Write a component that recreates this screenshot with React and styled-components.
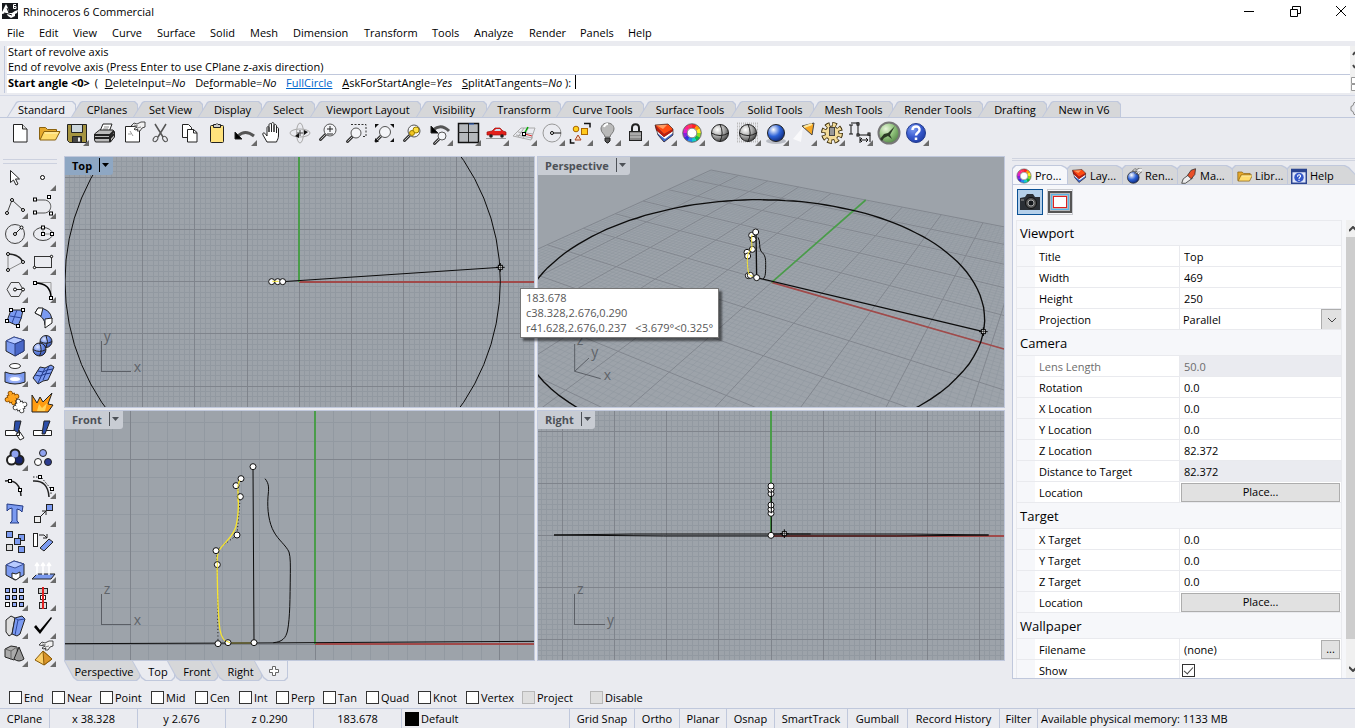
import React from "react";
import styled, { createGlobalStyle, css } from "styled-components";

const line = "#c0c8dc";
const chrome = "#eaebf0";
const blue = "#7b9af0";

const GlobalStyle = createGlobalStyle`
  * { box-sizing: border-box; }
  html, body, #root { height: 100%; }
  body {
    margin: 0;
    overflow: hidden;
    background: ${chrome};
    color: #000;
    font: 11px/15px "Open Sans", "Noto Sans", sans-serif;
  }
  button, input, select { font: inherit; color: inherit; }
  button { padding: 0; border: 0; background: none; white-space: nowrap; }
  svg { display: block; }
`;

const Window = styled.div`
  display: flex;
  flex-direction: column;
  height: 100vh;
  overflow: hidden;
`;

const TitleBar = styled.header`
  display: flex;
  align-items: center;
  gap: 5px;
  height: 24px;
  padding: 0 0 2px 2px;
  background: #fff;
  h1 { flex: 1; margin: 0; font-size: 11px; font-weight: 400; }
`;

// the close button runs past the right edge of a maximised window
const WindowButtons = styled.div`
  display: flex;
  margin-right: -9px;
`;

const WindowButton = styled.button`
  display: grid;
  place-items: center;
  width: 46px;
  height: 20px;
`;

const MenuBar = styled.nav`
  display: flex;
  height: 17px;
  padding-left: 7px;
  background: #fff;
`;

const MenuItem = styled.button`
  flex: 0 0 ${p => p.$w}px;
  text-align: left;
  line-height: 17px;
`;

const Command = styled.section`
  display: flex;
  margin: 5px 0 2px 4px;
  border-left: 1px solid ${line};
  padding-left: 2px;
`;

const CommandText = styled.div`
  flex: 1;
  background: #fff;
`;

const History = styled.div`
  height: 29px;
  padding-left: 1px;
  border-bottom: 1px solid ${line};
  line-height: 12px;
  overflow: hidden;
  p { margin: 0; height: 15px; }
`;

const Prompt = styled.div`
  height: 18px;
  padding-left: 1px;
  line-height: 16px;
  white-space: pre;
  b { margin-right: 2px; }
  button, a { margin-left: 4px; white-space: pre; }
  a { color: #0066cc; }
  input {
    width: 200px;
    height: 14px;
    margin-left: 4px;
    padding: 0;
    border: 0;
    border-left: 1px solid #000;
    outline: 0;
    vertical-align: top;
  }
`;

const Spinners = styled.div`
  width: 5px;
  overflow: hidden;
  background: #f0f0f0;
`;

const TabRow = styled.div`
  display: flex;
  justify-content: space-between;
  height: 23px;
  padding: 5px 0 0 7px;
  border-top: 1px solid #d5d9e6;
  border-bottom: 1px solid ${line};
`;

const Tabs = styled.div`
  display: flex;
  flex: none;
`;

const shapes = {
  top: "polygon(0 100%, 9px 1px, 11px 0, calc(100% - 3px) 0, 100% 3px, 100% 100%)",
  side: "polygon(0 100%, 0 3px, 3px 0, calc(100% - 20px) 0, calc(100% - 16px) 2px, 100% 100%)",
  bottom: "polygon(0 0, 100% 0, 100% calc(100% - 3px), calc(100% - 3px) 100%, 13px 100%, 9px calc(100% - 3px))"
};

const Tab = styled.button`
  position: relative;
  isolation: isolate;
  flex: 0 0 ${p => p.$w}px;
  height: 100%;
  background: ${line};
  clip-path: ${p => shapes[p.$shape]};
  &::before {
    content: "";
    position: absolute;
    z-index: -1;
    inset: 1px;
    background: ${p => (p.$active ? (p.$shape === "side" ? "#f6f7fa" : chrome) : "#d6d7d9")};
    clip-path: ${p => shapes[p.$shape]};
  }
  ${p => p.$shape === "top" && css`
    margin-left: -5px;
    padding-left: 5px;
    &:first-child { margin-left: 0; padding-left: 0; }
    &::before { bottom: 0; }
  `}
  ${p => p.$shape === "side" && css`
    display: flex;
    align-items: center;
    gap: 3px;
    margin-right: -15px;
    padding: 2px 0 0 4px;
    text-align: left;
    &::before { bottom: 0; }
  `}
  ${p => p.$shape === "bottom" && css`
    margin-left: -8px;
    padding-left: 9px;
    &:first-child { margin-left: 0; padding-left: 4px; }
    &::before { top: 0; }
  `}
`;

const Toolbar = styled.div`
  display: flex;
  flex: none;
  height: 38px;
  padding: 1px 6px;
`;

const ToolButton = styled.button`
  width: 28px;
  height: 28px;
`;

const Body = styled.main`
  display: flex;
  flex: 1;
  min-height: 0;
`;

const Palette = styled.div`
  display: grid;
  grid-template-columns: 28px 28px;
  grid-template-rows: 5px;
  grid-auto-rows: 28px;
  flex: 0 0 64px;
  align-content: start;
  padding: 3px 0 0 1px;
  &::before {
    content: "";
    grid-column: 1 / 3;
    height: 3px;
    margin-left: 2px;
    border: solid #ccd1df;
    border-width: 1px 0;
  }
`;

const Workspace = styled.div`
  display: flex;
  flex-direction: column;
  flex: 1;
  min-width: 0;
  padding-bottom: 6px;
`;

const ViewGrid = styled.div`
  position: relative;
  display: grid;
  grid-template-columns: 471fr 468fr;
  grid-template-rows: 252fr 251fr;
  gap: 2px;
  flex: 1;
  min-height: 0;
`;

const View = styled.section`
  position: relative;
  min-width: 0;
  min-height: 0;
  border: 1px solid ${line};
  background: #9da3aa;
  overflow: hidden;
  svg.scene { width: 100%; height: 100%; }
`;

const ViewTitle = styled.button`
  position: absolute;
  top: 0;
  left: 0;
  display: flex;
  align-items: center;
  gap: 7px;
  height: 18px;
  padding: 0 4px 2px 7px;
  border-radius: 0 0 3px 0;
  background: ${p => (p.$active ? "#8ea7c3" : "#c8ccd3")};
  color: ${p => (p.$active ? "#000" : "#4d5157")};
  font-weight: 700;
`;

const Readout = styled.output`
  position: absolute;
  top: 132px;
  left: 456px;
  width: 199px;
  padding: 1px 5px 2px;
  border: 1px solid #767676;
  background: #fff;
  box-shadow: 3px 3px 2px rgba(0, 0, 0, 0.5);
  color: #575757;
  white-space: pre;
`;

const ViewTabs = styled.div`
  display: flex;
  height: 20px;
`;

const Panel = styled.aside`
  display: flex;
  flex-direction: column;
  flex: 0 0 343px;
  margin: 2px 0 8px 7px;
  border-top: 1px solid #d0d4e0;
  overflow: hidden;
`;

const PanelTabs = styled.div`
  display: flex;
  flex: none;
  height: 24px;
  padding-top: 4px;
  margin-top: 1px;
  border-top: 1px solid #d0d4e0;
  overflow: hidden;
`;

const PanelBody = styled.div`
  display: flex;
  flex-direction: column;
  flex: 1;
  min-height: 0;
  border: solid ${line};
  border-width: 1px 0 1px 1px;
  background: #f6f7fa;
`;

const ModeButtons = styled.div`
  display: flex;
  gap: 4px;
  height: 35px;
  padding: 4px;
`;

const ModeButton = styled.button`
  width: 26px;
  height: 26px;
  border: 1px solid ${p => (p.$on ? "#0a5195" : "#c9cbd0")};
  background: ${p => (p.$on ? "#b5d0ea" : "#f6f7fa")};
`;

const Scroller = styled.div`
  display: flex;
  flex: 1;
  min-height: 0;
  overflow: hidden;
`;

const Props = styled.table`
  flex: none;
  align-self: flex-start;
  width: 326px;
  margin-left: 3px;
  border: 1px solid #e9eaee;
  border-width: 1px 1px 0;
  border-collapse: separate;
  border-spacing: 0;
  table-layout: fixed;
  th { font-weight: 400; text-align: left; padding: 0; }
  td { padding: 0; }
  tr { height: 21px; }
`;

const GroupHead = styled.th`
  && {
    height: ${p => (p.$first ? 25 : 26)}px;
    padding: 1px 0 0 3px;
    border-bottom: 1px solid #e9eaee;
    font-size: 13px;
  }
`;

const Gutter = styled.td`
  border-bottom: 1px solid #e9eaee;
`;

const Label = styled.th`
  && {
    height: 21px;
    padding-left: 4px;
    border-bottom: 1px solid #e9eaee;
    background: #fff;
    color: ${p => (p.$dim ? "#6d6d6d" : "#000")};
  }
`;

const Value = styled.td`
  height: 21px;
  border: solid #e9eaee;
  border-width: 0 0 1px 1px;
  background: ${p => (p.$locked ? chrome : "#fff")};
  color: ${p => (p.$dim ? "#6d6d6d" : "#000")};
  line-height: 19px;
  input[type="text"] { flex: 1; min-width: 0; height: 19px; padding: 0 0 0 4px; border: 0; background: none; outline: 0; }
`;

const FieldBox = styled.div`
  display: flex;
  align-items: center;
  height: 20px;
  padding-left: ${p => (p.$inset ? 2 : 0)}px;
`;

const PlaceButton = styled.button`
  flex: 1;
  height: 19px;
  margin: 0 1px;
  border: 1px solid #adadad;
  background: #e1e1e1;
  line-height: 16px;
`;

const BrowseButton = styled(PlaceButton)`
  flex: 0 0 19px;
`;

const Picker = styled.select`
  flex: 1;
  height: 20px;
  padding: 0 0 0 3px;
  border: 0;
  background: #fff;
  appearance: none;
  outline: 0;
`;

const PickerArrow = styled.span`
  display: grid;
  place-items: center;
  width: 20px;
  height: 20px;
  border: solid #adadad;
  border-width: 1px 0 0 1px;
  background: #e1e1e1;
`;

const Scrollbar = styled.div`
  display: flex;
  flex-direction: column;
  justify-content: space-between;
  flex: 0 0 9px;
  margin-left: auto;
  padding: 6px 0 6px 3px;
  background: linear-gradient(#cdcdcd, #cdcdcd) 0 17px / 100% calc(100% - 56px) no-repeat #f0f0f0;
  overflow: hidden;
`;

const Check = styled.input`
  appearance: none;
  display: grid;
  place-items: center;
  flex: none;
  width: 13px;
  height: 13px;
  margin: 0;
  border: 1px solid #333;
  background: #fff;
  &:disabled { border-color: #b8b8b8; background: #dfdfdf; }
  &:checked::after {
    content: "";
    width: 4px;
    height: 8px;
    margin-bottom: 2px;
    border: solid #444;
    border-width: 0 1px 1px 0;
    transform: rotate(42deg);
  }
`;

const SnapBar = styled.div`
  display: flex;
  align-items: center;
  height: 21px;
  margin: 0 0 0 3px;
  padding-left: 6px;
`;

const Snap = styled.label`
  display: flex;
  align-items: center;
  gap: 2px;
  flex: 0 0 ${p => p.$w}px;
  white-space: nowrap;
`;

const StatusBar = styled.footer`
  display: flex;
  height: 20px;
  border-top: 1px solid ${line};
`;

const StatusCell = styled.button`
  flex: 0 0 ${p => p.$w}px;
  display: flex;
  align-items: center;
  justify-content: ${p => (p.$left ? "flex-start" : "center")};
  gap: 2px;
  padding-left: ${p => (p.$left ? 3 : 0)}px;
  border-right: 1px solid ${p => (p.$end ? "transparent" : line)};
  i { width: 14px; height: 14px; background: #000; }
`;

/* ---------- icons: each is drawn on a 28 x 28 cell ---------- */

const Icon = ({ children, more }) => (
  <svg width="28" height="28" viewBox="0 0 28 28" fill="none" stroke="#222" strokeWidth="1">
    {children}
    {more && <path d="M27 21v6h-6z" fill="#6b6b6b" stroke="none" />}
  </svg>
);

const Dot = ({ x, y, r = 1.5 }) => <circle cx={x} cy={y} r={r} fill="#fff" stroke="#000" />;
const Sq = ({ x, y, s = 3, fill = "#fff" }) => (
  <rect x={x - s / 2} y={y - s / 2} width={s} height={s} fill={fill} stroke="#000" />
);

const Lens = ({ x = 15, y = 12, r = 6 }) => (
  <g>
    <path d={`M${x - r + 1.5} ${y + r - 1.5}l-5 5`} stroke="#333" strokeWidth="3" strokeLinecap="round" />
    <path d={`M${x - r + 1.5} ${y + r - 1.5}l-5 5`} stroke="#bbb" />
    <circle cx={x} cy={y} r={r} fill="#f4f5f8" stroke="#555" />
  </g>
);

const Ball = ({ x = 14, y = 14, r = 9, fill = "url(#gray)", wires = true }) => (
  <g stroke="#222">
    <circle cx={x} cy={y} r={r} fill={fill} />
    {wires && <path d={`M${x - r} ${y}q${r} ${r * 0.6} ${r * 2} 0M${x} ${y - r}q${r * 0.5} ${r} 0 ${r * 2}`} strokeWidth="1" />}
  </g>
);

const wheel = ["#f22", "#f90", "#fe2", "#8d2", "#1b4", "#1cc", "#28e", "#33d", "#82d", "#d2c", "#f28", "#f35"];

const ColorWheel = ({ r = 7 }) => (
  <g fill="none" strokeWidth="4">
    {wheel.map((c, i) => {
      const a = (i * Math.PI) / 6;
      const b = a + Math.PI / 5.6;
      return (
        <path
          key={c}
          stroke={c}
          d={`M${14 + r * Math.sin(a)} ${14 - r * Math.cos(a)}A${r} ${r} 0 0 1 ${14 + r * Math.sin(b)} ${14 - r * Math.cos(b)}`}
        />
      );
    })}
    <circle cx="14" cy="14" r={r + 2.3} stroke="#333" strokeWidth=".7" />
    <circle cx="14" cy="14" r={r - 2.2} stroke="#555" strokeWidth=".7" fill="#fff" />
  </g>
);

const Layers = () => (
  <g stroke="none">
    <path d="M5 6l3 10 6 7 9-7V10z" fill="#1b2c63" />
    <path d="M7 14l8 6 8-6v2l-9 7-6-7z" fill="#3f6bd0" />
    <path d="M6 11l8 7 9-6v2l-8 6-8-6z" fill="#fff" />
    <path d="M5 6l9 9 9-5v2l-9 6-8-7z" fill="#c01c0a" />
    <path d="M5 6l13-1 5 5-9 5z" fill="#ff4a12" />
    <path d="M6 6l11 0-4 4z" fill="#ff9b62" />
    <path d="M5 6l13-1 5 5v6l-9 7-6-7z" fill="none" stroke="#3a2522" strokeWidth=".7" />
  </g>
);

const Folder = () => (
  <g stroke="#8a6210">
    <path d="M5.500 20.500V8.500h6l2 2h9v4" fill="#e6a92c" />
    <path d="M6 21l4-8.500h16L21.500 21z" fill="#ffdc6e" />
    <path d="M11 14h13" stroke="#fff3b8" />
  </g>
);

const Hand = ({ x = 0, y = 0 }) => (
  <g transform={`translate(${x} ${y})`}>
    <path d="M0 4l3-3 3 1 4-2h4v5l-3 1-2 3H6l1-2-3 1-1-1 3-2z" fill="#f2f2f2" stroke="#222" strokeWidth=".8" />
    <path d="M3 3l4 1M6 6l4-1" stroke="#555" strokeWidth=".7" />
  </g>
);

const Box = () => (
  <g>
    <path d="M5 9l8-4 10 3v11l-9 5-9-5z" fill={blue} />
    <path d="M5 9l8-4 10 3-9 4z" fill="#b8cbff" stroke="#3a4f9a" />
    <path d="M14 12l9-4v11l-9 5z" fill="#4a68c8" stroke="#2a3c80" />
  </g>
);

// jigsaw piece: a small block with a knob on each side
const Piece = ({ x, y, fill, edge }) => (
  <g transform={`translate(${x} ${y}) rotate(-20)`}>
    <g fill={edge} stroke={edge} strokeWidth="1.500">
      <rect x="-3.500" y="-3.500" width="7" height="7" />
      <circle cx="0" cy="-5" r="1.800" /><circle cx="5" cy="0" r="1.800" />
      <circle cx="0" cy="5" r="1.800" /><circle cx="-5" cy="0" r="1.800" />
    </g>
    <g fill={fill} stroke="none">
      <rect x="-3.500" y="-3.500" width="7" height="7" />
      <circle cx="0" cy="-5" r="1.800" /><circle cx="5" cy="0" r="1.800" />
      <circle cx="0" cy="5" r="1.800" /><circle cx="-5" cy="0" r="1.800" />
    </g>
  </g>
);

const HelpBall = () => (
  <g>
    <circle cx="14" cy="14" r="9.500" fill="url(#help)" stroke="#233b8c" />
    <path d="M10.500 11c0-5 7.500-4.500 7 0c0 2.500-3.500 2.500-3.500 5.500M14 18.500v2.500" stroke="#fff" strokeWidth="2.500" />
  </g>
);

// eight teeth from a dashed ring
const Gear = () => (
  <g>
    <circle cx="14" cy="14" r="8.500" stroke="#3b2c08" strokeWidth="5" strokeDasharray="4.300 2.376" />
    <circle cx="14" cy="14" r="7" fill="#f3dc9a" stroke="#3b2c08" />
    <circle cx="14" cy="14" r="8" stroke="#f3dc9a" strokeWidth="4" strokeDasharray="2.800 3.483" strokeDashoffset="-.600" />
    <rect x="11.500" y="8.500" width="5" height="8" fill="#999" stroke="#444" />
  </g>
);

const toolbar = [
  ["New", 0, <><path d="M7.500 5.500h9l4.500 4.500v13H7.500z" fill="#fff" /><path d="M16.500 5.500V10H21" fill="#ddd" /></>],
  ["Open", 0, <Folder />],
  ["Save", 1, <><path d="M5.500 5.500h19v18h-17l-2-2z" fill="#a59440" /><path d="M9.500 5.500h11v8h-11z" fill="#ccd6dc" /><path d="M10.500 17.500h9v6h-9z" fill="#444" /><path d="M16 18.500h2v4h-2z" fill="#eee" stroke="none" /></>],
  ["Print", 0, <><path d="M10 12l3-7h9l-3 8z" fill="#fff" /><path d="M14 8h5M13 10h5" stroke="#888" /><path d="M4.500 15l5-4h13.500l1.500 2v5l-4 5H5.500l-1-2z" fill="#bbb" /><path d="M5 16h15l4-4M5 19h15l4-4M20 16v7" strokeWidth="2" /></>],
  ["Document properties", 0, <><path d="M7.500 7.500h14v15.500h-14z" fill="#fff" /><path d="M12 12l3 5M10 15h3" stroke="#999" /><Hand x={13} y={3} /></>],
  ["Cut", 0, <><path d="M9 5l8 13M20 5l-8 13" stroke="#555" strokeWidth="1.500" /><ellipse cx="9.500" cy="20" rx="2" ry="3" transform="rotate(35 9.500 20)" stroke="#555" /><ellipse cx="19" cy="20" rx="2" ry="3" transform="rotate(-35 19 20)" stroke="#555" /></>],
  ["Copy", 0, <><path d="M8.500 5.500h6l3 3v10h-9z" fill="#fff" /><path d="M13.500 10.500h6l3.500 3v9.500h-9.500z" fill="#fff" /><path d="M19.500 10.500v3.500H23" /></>],
  ["Paste", 0, <><rect x="8.500" y="6.500" width="13" height="17" rx="1" fill="#ffe27c" /><path d="M11.500 8.500v-3h2.500l1-1 1 1h2.500v3z" fill="#ccc" /></>],
  ["Undo", 1, <><path d="M8 17Q15 10 24 17" strokeWidth="3" stroke="#555" /><path d="M5 13v7h7z" fill="#000" /></>],
  ["Pan", 0, <path d="M9 23l-4-7c-1-2 1-3 2.500-1L9 17V9c0-2 2-2 2 0v4-7c0-2 2.500-2 2.500 0v7-8c0-2 2.500-2 2.500 0v8-6c0-2 2.500-2 2.500 0v7-4c0-2 2-2 2 0v6c0 4-1 4-2 7z" fill="#fff" />],
  ["Rotate view", 0, <><ellipse cx="14" cy="14" rx="10" ry="4" stroke="#aaa" /><ellipse cx="14" cy="14" rx="3.500" ry="10" stroke="#aaa" /><path d="M14 11v6M11 14h6" stroke="#444" /><path d="M9 17l4-3v5zM18 11l4 2-4 3z" fill="#111" stroke="none" /></>],
  ["Zoom", 0, <><Lens x={16} y={11} /><path d="M13 10h6M16 7v6M13 15h6" stroke="#222" /></>],
  ["Zoom window", 0, <><path d="M9 5.500h15v12h-4" stroke="#333" strokeDasharray="2 1.500" /><Lens x={14} y={14} r={5} /></>],
  ["Zoom extents", 0, <><Lens x={15} y={13} r={5.500} /><path d="M5 9V5h4zM20 5h4v4zM24 19v4h-4zM5 19v4h4z" fill="#111" stroke="none" /></>],
  ["Zoom selected", 0, <><Lens x={16} y={12} r={6} /><circle cx="18" cy="11" r="3" fill="#ffe146" stroke="#9a7d00" /><circle cx="14" cy="14" r="2.500" fill="#f3c623" stroke="#9a7d00" /></>],
  ["Undo view change", 1, <><path d="M7 11Q15 4 23 12" strokeWidth="3" stroke="#555" /><path d="M5 7v7h7z" fill="#000" /><Lens x={16} y={17} r={4} /></>],
  ["Four viewports", 1, <><rect x="4.500" y="4.500" width="20" height="19" fill="#b6b9bd" stroke="#111" strokeWidth="1.500" /><path d="M14.500 4v19M4 13.500h20" stroke="#222" /><path d="M15 5h5" stroke="#36c" /></>],
  ["Named views", 1, <><path d="M4 19.500h20" stroke="#999" /><path d="M5 16v-3l5-1 3-3h5l3 3 3 1v3z" fill="#e3201b" stroke="#a01210" strokeWidth=".7" /><path d="M12 12l2-2h4l1 2z" fill="#cde" stroke="none" /><circle cx="9" cy="17" r="1.800" fill="#222" stroke="none" /><circle cx="20" cy="17" r="1.800" fill="#222" stroke="none" /></>],
  ["Set CPlane", 1, <><path d="M3 17l8-8h14l-4 12zM8 13l15 2M6 16l17 3M14 9l-6 9M18 9l-5 11" stroke="#aaa" /><path d="M14 15l4-7" stroke="#0a0" strokeWidth="1.500" /><path d="M15 15l7 2" stroke="#d22" /><Sq x={14} y={15} s={3} /></>],
  ["Circle", 1, <><circle cx="14" cy="14" r="9" stroke="#999" /><path d="M14 14h9" stroke="#111" /><Dot x={14} y={14} /></>],
  ["Select", 1, <><path d="M18 4.500h6v4M4.500 20v4h4" strokeWidth="1.500" stroke="#111" /><circle cx="10" cy="10" r="2.800" fill="#ffd21e" stroke="#a60" /><rect x="15.500" y="9.500" width="6" height="6" fill="#ffc91c" stroke="#a60" /><path d="M12 16l3 5H9z" fill="#f7d5be" stroke="#a42" /></>],
  ["Hide", 1, <><path d="M11 18c0-3-4-4-4-8 0-8 13-8 13 0 0 4-4 5-4 8z" fill="#b9b9b9" stroke="#777" /><path d="M10 8q1-3 4-3" stroke="#fff" strokeWidth="2" /><path d="M11 19h5v3l-2 2h-1l-2-2z" fill="#555" /></>],
  ["Lock", 1, <><path d="M10 13V9c0-5 7-5 7 0v4" stroke="#222" strokeWidth="2" /><rect x="7.500" y="12.500" width="12" height="9" fill="#888" /><path d="M8 15h11M8 18h11" stroke="#ccc" /></>],
  ["Layers", 1, <Layers />],
  ["Properties", 1, <ColorWheel />],
  ["Shade", 0, <Ball r={8.5} />],
  ["Shade selected", 1, <><path d="M3 4.500h22M3 7.500h22M3 10.500h22M3 13.500h22M3 16.500h22M3 19.500h22M3 22.500h22" stroke="#bbb" strokeDasharray="1 1" strokeWidth="2" /><Ball r={8.5} /></>],
  ["Render", 1, <><ellipse cx="14" cy="22" rx="10" ry="3" fill="#b9bcc4" stroke="none" /><Ball r={8.5} fill="url(#blueBall)" wires={false} /></>],
  ["Spotlight", 1, <><path d="M13 8L3 20l8 3z" fill="#fff" stroke="none" opacity=".7" /><path d="M12 7l12-3-2 12z" fill="#f7a823" stroke="#444" /><path d="M14 8l8-3" stroke="#ffe9a0" strokeWidth="2" /></>],
  ["Options", 1, <Gear />],
  ["Dimension", 1, <><path d="M5 6v9M3 6h4M3 15h4M9 4h4M12 4v12h12v7M5 4h4M14 21h8M14 18v6M16 19l-2 2 2 2M20 19l2 2-2 2" stroke="#111" /><Sq x={12} y={5} s={2} /><Sq x={12} y={16} s={2} /><Sq x={23} y={15} s={2} /></>],
  ["Grasshopper", 0, <><circle cx="15" cy="14" r="10.500" fill="url(#green)" stroke="#777" strokeWidth="2" /><path d="M6 20l4-5 4-1 7-7-4 7-1 2 2 4-4-3-4 2-2 3z" fill="#2a3a24" stroke="none" /></>],
  ["Help", 1, <HelpBall />]
];

const palette = [
  ["Select", 0, <path d="M9.500 6.500v12l3-2.500 2.500 5 2-1-2.500-5h4z" fill="#fff" />],
  ["Point", 1, <Dot x={13.5} y={13.5} r={2} />],
  ["Polyline", 1, <><path d="M6 21l5-13 11 10" stroke="#444" /><Dot x={6} y={21} /><Dot x={11} y={8} /><Dot x={22} y={18} /></>],
  ["Curve", 1, <><path d="M6 8h9c9 0 9 13 0 13H6" stroke="#555" /><Sq x={6} y={7.500} /><Sq x={20} y={5} /><Sq x={6} y={20.500} /><Sq x={22} y={21.500} /></>],
  ["Circle", 1, <><circle cx="14" cy="14" r="9.500" stroke="#444" /><path d="M14 14l6-6" /><Dot x={14} y={14} /><Dot x={20.5} y={7.5} /></>],
  ["Ellipse", 1, <><ellipse cx="14" cy="14" rx="9.500" ry="6.500" stroke="#444" /><path d="M14 7v7h9" stroke="#888" /><Sq x={14} y={7.500} /><Sq x={14} y={14} /><Sq x={23} y={14} /></>],
  ["Arc", 1, <><path d="M7 6v16l15-8" stroke="#888" /><path d="M7 6q11 0 15 8" strokeWidth="1.500" /><Dot x={7} y={6} /><Dot x={7} y={22} /><Dot x={22} y={14} /></>],
  ["Rectangle", 1, <><rect x="5.500" y="8.500" width="17" height="11" stroke="#333" /><Dot x={22.5} y={8.5} r={1.2} /><Dot x={5.5} y={19.5} r={1.2} /></>],
  ["Polygon", 1, <><path d="M6 13.500l4-7h8l4 7-4 7h-8z" stroke="#444" /><path d="M14 13.500h8" /><Dot x={14} y={13.5} /><Dot x={22} y={13.5} /></>],
  ["Fillet", 1, <><path d="M6 6.500h16v16" stroke="#999" /><path d="M6 7c10 0 16 4 16 15" stroke="#000" strokeWidth="1.500" /><Sq x={6} y={7} /><Sq x={22} y={22} /></>],
  ["Surface", 1, <><path d="M10 6h12q-1 8-5 16L6 17z" fill={blue} /><path d="M16 6l-5 13M9 12l12 2" stroke="#2c469c" /><Sq x={10} y={6} /><Sq x={22} y={6} /><Sq x={6} y={17} /><Sq x={17} y={22} /></>],
  ["Sweep", 1, <><path d="M6 9l3-5q12 0 14 11l-7 6q0-8-10-12z" fill={blue} /><path d="M6 9l3-5h5l-2 8zM16 15l7-1v5l-7 5z" fill="#fff" /></>],
  ["Box", 1, <Box />],
  ["Sphere", 1, <><Ball x={17} y={9.5} r={6} fill="url(#blueSoft)" /><Ball x={10.5} y={17.5} r={6.5} fill="url(#blueSoft)" /></>],
  ["Cylinder", 1, <><ellipse cx="14" cy="6" rx="5.500" ry="2.500" stroke="#333" fill="#fff" /><path d="M4 12q10 4 20 0v10q-10 4-20 0z" fill={blue} /><ellipse cx="14" cy="19" rx="6" ry="3" fill="#fff" stroke="#9ab0f5" strokeWidth="2" /></>],
  ["Patch", 1, <><path d="M4 18l7-11 5 1 6-3 3 2-6 13-5 1-5 3z" fill={blue} /><path d="M6 15l5 1 5-2 6-1M9 11l5 1 4-2 6-1M16 8l-7 15M20 6l-6 14" stroke="#1e3788" /></>],
  ["Boolean", 0, <><Piece x={11} y={10} fill="#ffa51f" edge="#7a4300" /><Piece x={19} y={18} fill="#fff" edge="#222" /></>],
  ["Explode", 0, <><path d="M3 24V7l5 8 3-6 3 5 9-9-4 11 5 1-5 7z" fill="#ff9c12" /><path d="M8 23l2-7 3 4 5-5-2 8z" fill="#ffd35a" stroke="none" /></>],
  ["Trim", 0, <><path d="M4.500 14.500h14v5h-14zM15 18l4-2 4 6-4 2z" fill="#fff" /><path d="M14 5h6l-3 12-4-3z" fill="#2b4da8" /></>],
  ["Split", 0, <><path d="M4.500 14.500h18v5h-18z" fill="#fff" /><path d="M15 5h6l-5 13h-3z" fill="#2b4da8" /></>],
  ["Join", 1, <><g strokeWidth="3"><circle cx="14" cy="10" r="4" /><circle cx="10.500" cy="16" r="4" /><circle cx="18" cy="16" r="4" /></g><circle cx="10.500" cy="16" r="3.500" fill="#fff" stroke="none" /><circle cx="18" cy="16" r="3.500" fill="#17256e" stroke="none" /><circle cx="14" cy="10" r="3.500" fill="#8fa2f0" stroke="none" /></>],
  ["Ungroup", 0, <><circle cx="14" cy="9" r="3.500" fill="#8fa2f0" /><circle cx="9" cy="18" r="3.500" fill="#fff" /><circle cx="19" cy="18" r="3.500" fill="#2c3c90" /></>],
  ["Edit points", 0, <><path d="M4 9q15-2 16 15" strokeWidth="1.500" /><Sq x={9} y={9} /><Sq x={19} y={18} /></>],
  ["Control points", 1, <><path d="M4 5h8l10 12v6" strokeDasharray="1.500 1.500" /><path d="M4 9q15-1 16 16" strokeWidth="1.500" /><Sq x={11} y={5} /><Sq x={23} y={17} /></>],
  ["Text", 0, <path d="M6 4l16 2-1 6-2-2-3-1v12l2 2h-9l2-2V8l-3 1-2 2z" fill={blue} stroke="#233a85" />],
  ["Move", 1, <><rect x="17.500" y="4.500" width="6" height="6" fill={blue} /><rect x="5.500" y="16.500" width="6" height="6" fill="#eee" /><path d="M12 16l5-5M13 11h4v4" /></>],
  ["Copy", 0, <>{[[5, 4], [17, 7], [13, 11], [5, 17], [17, 19]].map(([x, y], i) => <rect key={i} x={x + 0.5} y={y - 0.5} width="6" height="6" fill={i === 3 ? "#ddd" : blue} />)}</>],
  ["Rotate", 0, <><rect x="4.500" y="5.500" width="4" height="13" fill="#fff" /><path d="M10 7h5l3 3M14 10h4V6" /><path d="M11 20l9-9 4 3-9 9z" fill={blue} /></>],
  ["Boolean difference", 1, <><path d="M5 9l8-4 10 3v11l-9 5-9-5z" fill={blue} /><path d="M5 9l8-4 10 3-9 4z" fill="#b8cbff" stroke="#3a4f9a" /><path d="M11 17l4 1 4-2v5l-4 3-4-2z" fill="#fff" /></>],
  ["Project", 1, <><path d="M3 23l5-5h18l-4 5z" fill={blue} /><path d="M8 19V9M14 19V9M20 19V9M6 10l2-3 2 3M12 10l2-3 2 3M18 10l2-3 2 3" stroke="#fff" strokeWidth="1.500" /></>],
  ["Array", 1, <>{[0, 1, 2, 3, 4, 5, 6, 7, 8].map(i => <rect key={i} x={4.5 + (i % 3) * 7} y={4.5 + Math.floor(i / 3) * 7} width="4" height="4" fill={i === 6 ? "#fff" : "#8fa8f4"} stroke="#111" />)}</>],
  ["Align", 1, <><rect x="9.500" y="4.500" width="9" height="5" fill="#ccc" /><rect x="11.500" y="11.500" width="5" height="4" fill="#fff" /><rect x="10.500" y="18.500" width="7" height="6" fill="#ddd" /><path d="M14 3v22" stroke="#e02020" strokeWidth="2" /></>],
  ["Bend", 1, <><path d="M5 8l5-4 4 2-3 16-3 2-3-4z" fill="#ddd" /><path d="M14 6l7-2 3 3-5 15-3 2-5-2z" fill={blue} /><path d="M14 6l3 2 7-1M17 8l-3 15" stroke="#2c469c" /></>],
  ["Check", 1, <path d="M5 15l2-2 4 5L22 5l1 1-12 16z" fill="#000" stroke="none" />],
  ["Mesh", 1, <><path d="M4 9l6-3 6 1 1 10-4 3-9-3z" fill="#aaa" /><path d="M4 9l6 2 6-4M10 11v9" stroke="#666" /><path d="M18 7l5 12q-5 4-10 0z" fill="#999" /></>],
  ["Render tools", 1, <><path d="M14 11L6 20l9 5 8-6z" fill="#fbcf6a" stroke="#8a5b08" /><path d="M14 11l1 14 8-6z" fill="#d9952a" stroke="#8a5b08" /><Hand x={10} y={1} /></>]
];

/* ---------- viewport scenes, 3 units to a pixel ---------- */

const Axis = ({ x, y, h, v }) => (
  <g stroke="#5b5f66" strokeWidth="3" fill="none">
    <path d={`M${x} ${y - 90}v90h90`} shapeRendering="crispEdges" />
    <g fill="#5f6369" stroke="none" fontSize="42" fontFamily="Open Sans, sans-serif">
      <text x={x + 7} y={y - 90}>{v}</text>
      <text x={x + 97} y={y + 2}>{h}</text>
    </g>
  </g>
);

const Flat = ({ box, ox, oy, step }) => {
  const [x, y, w, h] = box;
  const minor = [];
  const major = [];
  for (let i = Math.ceil((x - ox) / step); ox + i * step < x + w; i++) {
    (i % 10 ? minor : major).push(`M${ox + i * step} ${y}v${h}`);
  }
  for (let i = Math.ceil((y - oy) / step); oy + i * step < y + h; i++) {
    (i % 10 ? minor : major).push(`M${x} ${oy + i * step}h${w}`);
  }
  return (
    <g shapeRendering="crispEdges" fill="none" strokeWidth="3">
      <path d={minor.join("")} stroke="#9299a1" />
      <path d={major.join("")} stroke="#7f848c" />
      <path d={`M${ox} ${oy}H${x + w}`} stroke="#a14a4a" strokeWidth="6" />
      <path d={`M${ox} ${oy}V${y}`} stroke="#4a9c4a" strokeWidth="6" />
    </g>
  );
};

const Knot = ({ at }) => at.map(([x, y]) => (
  <circle key={`${x},${y}`} cx={x} cy={y} r="9" fill="#fff" stroke="#111" strokeWidth="3" />
));

const Cross = ({ x, y }) => (
  <g stroke="#000" strokeWidth="3" fill="#fff">
    <path d={`M${x - 13} ${y}h26M${x} ${y - 13}v26`} />
    <rect x={x - 6} y={y - 6} width="12" height="12" />
    <path d={`M${x - 6} ${y}h12M${x} ${y - 6}v12`} strokeWidth="2" />
  </g>
);

const Scene = ({ box, children }) => (
  <svg className="scene" viewBox={box.join(" ")} preserveAspectRatio="xMidYMid slice" fill="none" stroke="#0c0c0c" strokeWidth="3">
    {children}
  </svg>
);

const topBox = [-195, 21, 1407, 750];
const TopScene = () => (
  <Scene box={topBox}>
    <Flat box={topBox} ox={508} oy={395} step={15.67} />
    <circle cx="458" cy="394" r="653" />
    <path d="M458 395L1111 352" />
    <Knot at={[[425, 395], [443, 395], [458, 395]]} />
    <path d="M427 394h19" stroke="#f4e535" />
    <Cross x={1111} y={352} />
    <Axis x={-86} y={664} h="x" v="y" />
  </Scene>
);

// world (grid units) to screen
const project = (x, y) => {
  const w = 1 - 0.04207 * x + 0.0783 * y;
  return [
    Math.round((106.3 * x + 135.25 * y + 725) / w),
    Math.round((22.52 * x - 37.65 * y + 397) / w)
  ].join(" ");
};

const perspLines = keep => {
  const out = [];
  for (let i = -50; i <= 50; i++) {
    if (keep(i)) {
      out.push(`M${project(i / 10, -5)}L${project(i / 10, 5)}M${project(-5, i / 10)}L${project(5, i / 10)}`);
    }
  }
  return out.join("");
};

const perspCircle = () => {
  const pts = [];
  for (let a = 0; a < 360; a += 3) {
    const r = (a * Math.PI) / 180;
    pts.push(project(-0.33 + 4.17 * Math.cos(r), 4.17 * Math.sin(r)));
  }
  return `M${pts.join("L")}Z`;
};

const perspBox = [24, 21, 1398, 750];
const PerspectiveScene = () => (
  <Scene box={perspBox}>
    <path d={perspLines(i => i % 10)} stroke="#8f969f" strokeWidth="1.500" />
    <path d={perspLines(i => i % 10 === 0)} stroke="#82878f" />
    <path d={`M${project(0, 0)}L1422 597`} stroke="#a14a4a" strokeWidth="5" />
    <path d={`M${project(0, 0)}L${project(0, 5)}`} stroke="#4a9c4a" strokeWidth="5" />
    <path d={perspCircle()} strokeWidth="4" />
    <path d="M680 383L1360 545M678 246L680 383" strokeWidth="4" />
    <path d="M684 262c8 12 2 30 9 42c14 12 14 22 14 40c0 20 0 40-8 42" />
    <Knot at={[[665, 256], [669, 268], [667, 298], [651, 307], [653, 318], [655, 377], [661, 376], [677, 246]]} />
    <path d="M666 254C662 280 670 290 662 300C648 312 652 340 654 360Q656 378 668 379" stroke="#f7e52f" />
    <Knot at={[[680, 383]]} />
    <Cross x={1360} y={545} />
    <path d="M134 582v82l78 22M134 664l43-40" stroke="#5b5f66" />
    <g fill="#5f6369" stroke="none" fontSize="42" fontFamily="Open Sans, sans-serif">
      <text x="140" y="585">z</text>
      <text x="184" y="622">y</text>
      <text x="221" y="689">x</text>
    </g>
  </Scene>
);

const frontBox = [15, 33, 1407, 747];
const FrontScene = () => (
  <Scene box={frontBox}>
    <Flat box={frontBox} ox={765} oy={732} step={55.35} />
    <path d="M15 731L580 729L1422 724" />
    <path d="M579 200L582 728" />
    <path d="M543 236L528 257L541 290L531 405L468 452L472 494L474 731" strokeDasharray="3 7" />
    <path d="M543 236C531 252 533 262 535 290C536 330 534 360 526 385C514 418 486 432 474 457C469 480 472 500 472 540C474 620 474 650 480 690C484 712 492 726 508 728" stroke="#f7e52f" strokeWidth="4" />
    <path d="M508 729h68" stroke="#70681a" />
    <path d="M615 236C629 252 626 268 624 290C621 330 627 370 642 396C655 420 678 436 687 456C692 472 691 500 691 520C690 600 690 650 683 690C678 716 665 726 640 728" />
    <Knot at={[[579, 200], [543, 236], [528, 257], [541, 290], [531, 405], [468, 452], [472, 494], [474, 731], [504, 728], [582, 728]]} />
    <path d="M540 240q-6 10-7 22M534 285v20M472 486v18M498 723l12 5" stroke="#f7e52f" />
    <Axis x={124} y={673} h="x" v="z" />
  </Scene>
);

const rightBox = [24, 33, 1398, 747];
const RightScene = () => (
  <Scene box={rightBox}>
    <Flat box={rightBox} ox={723} oy={407} step={15.64} />
    <path d="M72 405L310 402H840M72 405L400 408H1100L1376 405L1140 402H840" />
    <path d="M724 402h118" />
    <path d="M724 258v147" />
    <Knot at={[[723, 340], [723, 328], [723, 315], [723, 281], [723, 268], [723, 258]]} />
    <path d="M724 270v70" />
    <Knot at={[[723, 406]]} />
    <Cross x={763} y={401} />
    <Axis x={134} y={673} h="y" v="z" />
  </Scene>
);

const views = [
  ["Top", TopScene, true],
  ["Perspective", PerspectiveScene],
  ["Front", FrontScene],
  ["Right", RightScene]
];

/* ---------- data ---------- */

const menus = [
  ["File", 32], ["Edit", 34], ["View", 39], ["Curve", 45], ["Surface", 53], ["Solid", 40], ["Mesh", 43],
  ["Dimension", 71], ["Transform", 68], ["Tools", 42], ["Analyze", 55], ["Render", 51], ["Panels", 48], ["Help", 40]
];

const toolTabs = [
  ["Standard", 69], ["CPlanes", 67], ["Set View", 70], ["Display", 64], ["Select", 58], ["Viewport Layout", 111],
  ["Visibility", 71], ["Transform", 79], ["Curve Tools", 88], ["Surface Tools", 97], ["Solid Tools", 83],
  ["Mesh Tools", 84], ["Render Tools", 95], ["Drafting", 69], ["New in V6", 79]
];

const panelTabs = [
  ["Pro...", <ColorWheel r={7.5} />],
  ["Lay...", <Layers />],
  ["Ren...", <><Ball x={13} y={16} r={8} fill="url(#blueBall)" wires={false} /><Hand x={12} y={3} /></>],
  ["Ma...", <><path d="M4 24l2-6 8-6 5 5-10 7z" fill="#eee" /><path d="M12 13l5-7 6-2-1 8-5 6z" fill="#e8502a" /></>],
  ["Libr...", <Folder />],
  ["Help", <><rect x="4" y="5" width="20" height="19" fill="#dfe6fb" stroke="#2b4490" strokeWidth="2" /><path d="M4 7h20" stroke="#2b4490" strokeWidth="4" /><circle cx="14" cy="16" r="6.500" fill="#3558c8" stroke="none" /><path d="M12 15c0-4 5-3 4 0c-1 1-2 1-2 3M14 19v2" stroke="#fff" strokeWidth="1.500" /></>]
];

const groups = [
  ["Viewport", [["Title", "Top"], ["Width", "469"], ["Height", "250"], ["Projection", "Parallel", "select"]]],
  ["Camera", [
    ["Lens Length", "50.0", "dim"], ["Rotation", "0.0"], ["X Location", "0.0"], ["Y Location", "0.0"],
    ["Z Location", "82.372"], ["Distance to Target", "82.372", "locked"], ["Location", "Place...", "button"]
  ]],
  ["Target", [["X Target", "0.0"], ["Y Target", "0.0"], ["Z Target", "0.0"], ["Location", "Place...", "button"]]],
  ["Wallpaper", [["Filename", "(none)", "file"], ["Show", "", "check"]]]
];

const snaps = [
  ["End", 43], ["Near", 48], ["Point", 51], ["Mid", 44], ["Cen", 44], ["Int", 37], ["Perp", 47], ["Tan", 43],
  ["Quad", 52], ["Knot", 48], ["Vertex", 56], ["Project", 68, true], ["Disable", 60, true]
];

const readings = [["CPlane", 50], ["x 38.328", 88], ["y 2.676", 88], ["z 0.290", 88], ["183.678", 88]];
const modes = [
  ["Ortho", 45], ["Planar", 47], ["Osnap", 48], ["SmartTrack", 73], ["Gumball", 60], ["Record History", 92], ["Filter", 38]
];

const Gradient = ({ id, stops }) => (
  <radialGradient id={id} cx=".35" cy=".3" r=".8">
    {stops.map((c, i) => <stop key={c} offset={i / (stops.length - 1)} stopColor={c} />)}
  </radialGradient>
);

const Logo = () => (
  <svg width="16" height="16" viewBox="0 0 16 16">
    <defs>
      <Gradient id="gray" stops={["#fff", "#aaa", "#333"]} />
      <Gradient id="blueBall" stops={["#fff", "#2c62d8", "#0b1f66"]} />
      <Gradient id="blueSoft" stops={["#dfe7ff", "#6a8bea", "#2c469c"]} />
      <Gradient id="green" stops={["#e8f6dc", "#8fc27a", "#4b7c40"]} />
      <Gradient id="help" stops={["#7d9cf2", "#3a5cd0", "#1d3aa0"]} />
    </defs>
    <rect width="16" height="16" fill="#16181c" />
    <path d="M0 9l3-6 1-2 2 4 1 5 3 0 3-2 3-1-1 3-2 1v2l-4 2-3-2-2-3-4 1z" fill="#fff" />
    <path d="M2 10l5 1 3 1M5 5l2 5" stroke="#16181c" fill="none" />
    <path d="M14 1.500h-2.500v4H14v-2h-2.500" stroke="#fff" fill="none" />
  </svg>
);

const Field = ({ id, value, kind }) => {
  if (kind === "select") {
    return (
      <FieldBox>
        <Picker id={id} defaultValue={value}><option>{value}</option></Picker>
        <PickerArrow><svg width="10" height="6"><path d="M1 1l4 4 4-4" fill="none" stroke="#444" /></svg></PickerArrow>
      </FieldBox>
    );
  }
  if (kind === "button") return <FieldBox><PlaceButton id={id}>{value}</PlaceButton></FieldBox>;
  if (kind === "check") return <FieldBox $inset><Check id={id} type="checkbox" defaultChecked /></FieldBox>;
  return (
    <FieldBox>
      <input id={id} type="text" defaultValue={value} disabled={kind === "dim"} readOnly={kind === "locked"} />
      {kind === "file" && <BrowseButton aria-label="Browse">...</BrowseButton>}
    </FieldBox>
  );
};

const Properties = () => (
  <Props>
    <colgroup><col width="18" /><col width="144" /><col /></colgroup>
    <tbody>
      {groups.map(([name, rows], g) => (
        <React.Fragment key={name}>
          <tr><GroupHead colSpan="3" $first={g === 0}>{name}</GroupHead></tr>
          {rows.map(([label, value, kind]) => {
            const id = `${name}-${label}`.replace(/ /g, "-");
            return (
              <tr key={id}>
                <Gutter />
                <Label scope="row" $dim={kind === "dim"}><label htmlFor={id}>{label}</label></Label>
                <Value $dim={kind === "dim"} $locked={kind === "dim" || kind === "locked"}>
                  <Field id={id} value={value} kind={kind} />
                </Value>
              </tr>
            );
          })}
        </React.Fragment>
      ))}
    </tbody>
  </Props>
);

const App = () => (
  <Window>
    <GlobalStyle />
    <TitleBar>
      <Logo />
      <h1>Rhinoceros 6 Commercial</h1>
      <WindowButtons>
        <WindowButton aria-label="Minimize"><svg width="10" height="10"><path d="M0 5.500h10" stroke="#000" /></svg></WindowButton>
        <WindowButton aria-label="Restore"><svg width="11" height="11" fill="none" stroke="#000"><path d="M.5 3.500h7v7h-7zM2.500 3V.5h8v7H8" /></svg></WindowButton>
        <WindowButton aria-label="Close"><svg width="12" height="12" stroke="#000"><path d="M1 1l10 10M11 1L1 11" /></svg></WindowButton>
      </WindowButtons>
    </TitleBar>
    <MenuBar>{menus.map(([m, w]) => <MenuItem key={m} $w={w}>{m}</MenuItem>)}</MenuBar>

    <Command>
      <CommandText>
        <History>
          <p>Start of revolve axis</p>
          <p>End of revolve axis (Press Enter to use CPlane z-axis direction)</p>
        </History>
        <Prompt>
          <b>Start angle &lt;0&gt;</b>{" ("}
          <button> <u>D</u>eleteInput=<i>No</i></button>{"  "}
          <button>De<u>f</u>ormable=<i>No</i></button>{"  "}
          <a href="#full">FullCircle</a>{"  "}
          <button><u>A</u>skForStartAngle=<i>Yes</i></button>{"  "}
          <button><u>S</u>plitAtTangents=<i>No</i></button>{" ):"}
          <input type="text" aria-label="Command" />
        </Prompt>
      </CommandText>
      <Spinners>
        <svg width="5" height="47" stroke="#444" fill="none"><path d="M5 6l-2 3M3 19l2 3" strokeWidth="2" /><path d="M1.500 31.500h4v6h-4zM1.500 38.500h4v6h-4z" stroke="#999" fill="#fff" /></svg>
      </Spinners>
    </Command>

    <TabRow>
      <Tabs>
        {toolTabs.map(([t, w], i) => <Tab key={t} $w={w} $shape="top" $active={i === 0}>{t}</Tab>)}
      </Tabs>
      <svg width="5" height="14" fill="none" stroke="#888"><path d="M7 1.500H4l-1 3-2 1v4l2 1 1 3h3" /></svg>
    </TabRow>
    <Toolbar>
      {toolbar.map(([name, more, art]) => (
        <ToolButton key={name} aria-label={name}><Icon more={more}>{art}</Icon></ToolButton>
      ))}
    </Toolbar>

    <Body>
      <Palette>
        {palette.map(([name, more, art]) => (
          <ToolButton key={name} aria-label={name}><Icon more={more}>{art}</Icon></ToolButton>
        ))}
      </Palette>
      <Workspace>
        <ViewGrid>
          {views.map(([name, Art, active]) => (
            <View key={name}>
              <Art />
              <ViewTitle $active={active}>
                {name}
                <svg width="10" height="14"><path d="M.5 0v14" stroke="currentColor" /><path d="M3 5h7l-3.500 4z" fill="currentColor" /></svg>
              </ViewTitle>
            </View>
          ))}
          <Readout>{"183.678\nc38.328,2.676,0.290\nr41.628,2.676,0.237   <3.679°<0.325°"}</Readout>
        </ViewGrid>
        <ViewTabs>
          <Tab $shape="bottom" $w={76}>Perspective</Tab>
          <Tab $shape="bottom" $w={43} $active>Top</Tab>
          <Tab $shape="bottom" $w={51}>Front</Tab>
          <Tab $shape="bottom" $w={52}>Right</Tab>
          <Tab $shape="bottom" $w={34} $active aria-label="New view">
            <svg width="20" height="10"><path d="M9.500.5h3v3h3v3h-3v3h-3v-3h-3v-3h3z" fill="#fff" stroke="#666" /></svg>
          </Tab>
        </ViewTabs>
      </Workspace>

      <Panel>
        <PanelTabs>
          {panelTabs.map(([name, art], i) => (
            <Tab key={name} $shape="side" $w={i === 5 ? 78 : 70} $active={i === 0}>
              <svg width="16" height="16" viewBox="3 3 22 22" fill="none" stroke="#222">{art}</svg>
              {name}
            </Tab>
          ))}
        </PanelTabs>
        <PanelBody>
          <ModeButtons>
            <ModeButton $on aria-label="Camera">
              <svg width="24" height="24"><path d="M2 8l5-1 2-3h6l2 3h5v13H2z" fill="#2b2f35" /><circle cx="13" cy="13" r="5.500" fill="#555" stroke="#111" /><circle cx="13" cy="13" r="3" fill="#15181c" stroke="#aaa" /><path d="M3 10h3" stroke="#999" /></svg>
            </ModeButton>
            <ModeButton aria-label="Frame">
              <svg width="24" height="24" fill="none"><rect x="1" y="2" width="22" height="20" stroke="#555" strokeWidth="2" fill="#b5b8bb" /><rect x="3.500" y="4.500" width="17" height="15" stroke="#5ab4e8" /><rect x="5.500" y="6.500" width="13" height="11" stroke="#e02020" fill="#fff" /></svg>
            </ModeButton>
          </ModeButtons>
          <Scroller>
            <Properties />
            <Scrollbar>
              <svg width="8" height="6"><path d="M0 5l4-4 4 4" fill="none" stroke="#444" strokeWidth="2" /></svg>
              <svg width="8" height="6"><path d="M0 1l4 4 4-4" fill="none" stroke="#444" strokeWidth="2" /></svg>
            </Scrollbar>
          </Scroller>
        </PanelBody>
      </Panel>
    </Body>

    <SnapBar>
      {snaps.map(([name, w, off]) => (
        <Snap key={name} $w={w}><Check type="checkbox" disabled={off} />{name}</Snap>
      ))}
    </SnapBar>
    <StatusBar>
      {readings.map(([t, w]) => <StatusCell key={t} $w={w}>{t}</StatusCell>)}
      <StatusCell $w={168} $left><i />Default</StatusCell>
      <StatusCell $w={65}>Grid Snap</StatusCell>
      {modes.map(([t, w]) => <StatusCell key={t} $w={w}>{t}</StatusCell>)}
      <StatusCell $w={220} $left $end>Available physical memory: 1133 MB</StatusCell>
    </StatusBar>
  </Window>
);

export default App;
